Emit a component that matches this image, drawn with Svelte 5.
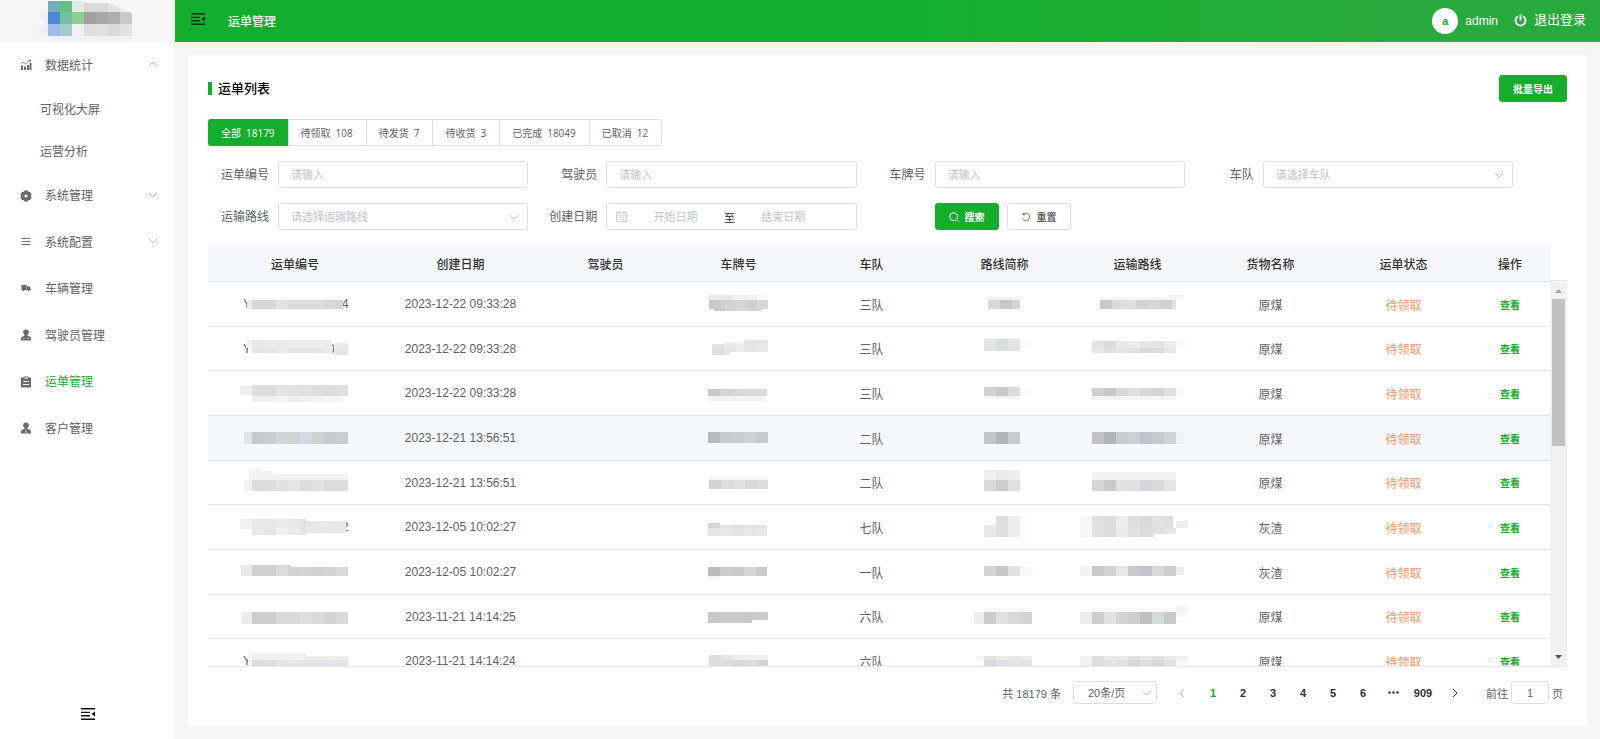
<script>
  const tabs = [
    { label: '全部', count: 18179 },
    { label: '待领取', count: 108 },
    { label: '待发货', count: 7 },
    { label: '待收货', count: 3 },
    { label: '已完成', count: 18049 },
    { label: '已取消', count: 12 },
  ];

  const menu = [
    { label: '数据统计', icon: 'chart', arrow: 'up', children: ['可视化大屏', '运营分析'] },
    { label: '系统管理', icon: 'gear', arrow: 'down' },
    { label: '系统配置', icon: 'operation', arrow: 'down' },
    { label: '车辆管理', icon: 'truck' },
    { label: '驾驶员管理', icon: 'driver' },
    { label: '运单管理', icon: 'order' },
    { label: '客户管理', icon: 'custom' },
  ];

  const columns = ['运单编号', '创建日期', '驾驶员', '车牌号', '车队', '路线简称', '运输路线', '货物名称', '运单状态', '操作'];

  // masked fields: bands of [x, y, width, height, shades], one shade per 12px block
  const rows = [
    {
      date: '2023-12-22 09:33:28', team: '三队', goods: '原煤',
      marks: [['Y', 8], ['4', 107]],
      no: [[13, 5, 94, 3, 'f8'], [12, 8, 5, 9, 'ed'], [17, 8, 91, 9, 'd6 d6 e2 dc dc dc d8 d2d6db']],
      plate: [[30, 3, 59, 5, 'ea ea f0 f4 f8'], [30, 8, 59, 9, 'c9 d3 d6 d0 d8'], [35, 17, 47, 2, 'c9 d3 d6 d0']],
      short: [[43, 5, 32, 3, 'f0'], [43, 8, 32, 9, 'd8 c8 d4']],
      route: [[22, 5, 76, 3, 'f4'], [90, 3, 16, 4, 'f4'], [22, 8, 76, 9, 'c9 dc dce0e0 d2 d6 d0 e3']],
    },
    {
      date: '2023-12-22 09:33:28', team: '三队', goods: '原煤',
      marks: [['Y', 8], ['0', 93]],
      no: [[11, 2, 6, 9, 'f2'], [17, 3, 80, 8, 'e8 ea ea ec ec ec ec'], [17, 11, 80, 5, 'e4 e6 ea e4 e4 e6 e8'], [99, 6, 14, 6, 'ea'], [99, 12, 14, 6, 'e4']],
      plate: [[45, 5, 20, 3, 'ee f2'], [33, 7, 33, 4, 'e2 e8 ee'], [33, 11, 33, 4, 'de e4 ec'], [33, 15, 18, 3, 'de e4'], [65, 3, 24, 12, 'e4 e6']],
      short: [[39, 2, 36, 12, 'e4 dadddd e4'], [75, 3, 12, 8, 'fb']],
      route: [[14, 4, 84, 7, 'e2 dc e8 ec e6 e4 ec'], [14, 11, 84, 5, 'e6 e0 e6 e2 d8 dc e8'], [98, 4, 10, 7, 'fa']],
    },
    {
      date: '2023-12-22 09:33:28', team: '三队', goods: '原煤',
      no: [[5, 5, 12, 9, 'ee'], [17, 4, 96, 11, 'dd dd e4 e2 e0 de dc dedfe2'], [17, 15, 90, 6, 'f0 f0 f4 ef f0 f1 f4 f2']],
      plate: [[29, 8, 59, 7, 'c8 d4 d8 da da'], [29, 15, 58, 5, 'f2']],
      short: [[39, 6, 36, 9, 'd1 c8 dc'], [39, 15, 36, 3, 'f3'], [75, 7, 12, 8, 'fb']],
      route: [[14, 7, 84, 8, 'd0 c7 da e0 d8 d4 e0'], [14, 15, 84, 4, 'f4'], [98, 7, 6, 8, 'fa']],
    },
    {
      date: '2023-12-21 13:56:51', team: '二队', goods: '原煤', hover: true,
      no: [[9, 6, 8, 12, 'dfe3e3'], [17, 6, 96, 12, 'c7c8ca c9cdcf d2d5d8 d0d2d3 d4d7dd cfd1d3 c9cacc c9ced1']],
      plate: [[29, 6, 60, 11, 'b7babd c8cacf cacbd0 d0d1d7 c6c9ce']],
      short: [[39, 6, 36, 12, 'c4c5c8 b2b5b9 c9cbcf']],
      route: [[14, 6, 84, 12, 'c2c2c5 b2b4b7 c8cbd0 cecfd1 bfc3cf c6c8cc d0d2d7'], [98, 6, 8, 12, 'eef0f3']],
    },
    {
      date: '2023-12-21 13:56:51', team: '二队', goods: '原煤',
      no: [[14, -2, 12, 5, 'f2'], [26, 0, 12, 3, 'f3'], [14, 3, 99, 6, 'f2'], [9, 9, 8, 11, 'f0'], [17, 9, 96, 11, 'dc dddde0 e2 e4 dd e2 dc dadee2']],
      plate: [[30, 6, 59, 3, 'f4'], [30, 9, 59, 9, 'd2 dd e0 d6d8dc dc']],
      short: [[39, -1, 36, 10, 'ef ea ee'], [39, 9, 36, 11, 'd9 cd dde1e5']],
      route: [[14, 1, 84, 8, 'f2'], [14, 9, 84, 11, 'd6 c9 e0e1e4 e0 d4d5da da e4']],
    },
    {
      date: '2023-12-05 10:02:27', team: '七队', goods: '灰渣',
      marks: [['2', 107]],
      no: [[5, 4, 12, 10, 'f0'], [17, 4, 54, 9, 'e6 e8 ea e6 e2'], [71, 6, 40, 12, 'e6 e8 e6 e6e8eb'], [17, 13, 54, 7, 'e8 e6 f2 ea e4']],
      plate: [[29, 8, 12, 5, 'd6'], [41, 10, 47, 4, 'e4 e0 e4 e2'], [29, 13, 59, 8, 'e4 e6 e3 e6 e8']],
      short: [[51, 1, 24, 21, 'dcdedf eeeeee'], [39, 10, 12, 12, 'e8'], [75, 1, 12, 21, 'fafcfe']],
      route: [[2, 1, 12, 21, 'f6'], [14, 1, 81, 12, 'e0 dc ee de da e2 e0'], [14, 13, 84, 6, 'e2 dc ea e2 dc e0 e4'], [14, 19, 62, 3, 'e2 dc ea e2 dc e0'], [98, 6, 12, 7, 'ebeff2']],
    },
    {
      date: '2023-12-05 10:02:27', team: '一队', goods: '灰渣',
      no: [[6, 5, 11, 11, 'ea'], [17, 5, 39, 11, 'd0 d0 dc d6'], [53, 7, 60, 9, 'd2 d4 d0 d3 d6dadd']],
      plate: [[29, 7, 59, 9, 'bc cccccf c9 d5 c9cad0'], [29, 16, 12, 4, 'f6']],
      short: [[39, 6, 36, 10, 'd4 c6 e2'], [75, 6, 12, 10, 'f5f9fd']],
      route: [[2, 6, 12, 10, 'f2'], [14, 6, 84, 10, 'c9 d2 e6 c8 c3c4c9 d8 cd'], [98, 7, 8, 8, 'ebeff2']],
    },
    {
      date: '2023-11-21 14:14:25', team: '六队', goods: '原煤',
      no: [[7, 7, 10, 12, 'eaeceb'], [17, 7, 96, 12, 'cfcecd cfcecd da da dddee0 dadadc d3d4d6 da']],
      plate: [[29, 7, 60, 8, 'c8 ca ca c8 cc'], [29, 15, 44, 3, 'c8 ca ca c8']],
      short: [[39, 3, 48, 4, 'f8'], [29, 7, 10, 12, 'ee'], [39, 7, 48, 12, 'cacbcd e0 d6d7d6 d3d4d6']],
      route: [[14, 3, 84, 4, 'f8'], [2, 7, 12, 12, 'ec'], [14, 7, 84, 12, 'cbcdce e2 d4 cd bf d5dade c9'], [98, 1, 12, 6, 'f4'], [98, 7, 10, 6, 'f5f9fd']],
    },
    {
      date: '2023-11-21 14:14:24', team: '六队', goods: '原煤',
      marks: [['Y', 8]],
      no: [[13, 4, 4, 14, 'f6'], [17, 4, 54, 7, 'f0'], [71, 7, 42, 4, 'ee'], [17, 11, 96, 8, 'dd df e4 e6 e4 e2e4e6 e4e5e8 e4']],
      plate: [[30, 6, 59, 5, 'dd e6 ee f0 f0'], [30, 11, 59, 9, 'dd dd d8 dc d4']],
      short: [[31, 7, 8, 4, 'f4'], [39, 7, 48, 4, 'e2 ec e8 ec'], [39, 11, 48, 8, 'd9dadc dfe0e3 e6 e4']],
      route: [[2, 7, 108, 4, 'f2 de ea e8 e2 e6 e2 e8 ee'], [2, 11, 108, 8, 'f2 dcdddf e4 e0 d8 de d8 e2 f5f9fd']],
    },
  ];

  const logo = [
    ['#74aebd', '#63bf86', '#deeedd', '#dadada', '#dadada', '#e4e4e4', '#f0f0f0'],
    ['#4d88d6', '#74c19d', '#8dce95', '#a0a0a0', '#a8a8a8', '#aeaeae', '#c8c8c8'],
    ['#a1b9ed', '#a3cbcb', '#f0f0f0', '#dedede', '#e0e0e0', '#dadada', '#e2e2e2'],
  ];

  const pages = [1, 2, 3, 4, 5, 6];

  let activeTab = $state(0);
  let activeMenu = $state('运单管理');
  let page = $state(1);

  function blocks([x, y, w, h, shades]) {
    const list = shades.split(' ');
    if (list.length === 1) return [{ x, y, w, h, fill: color(list[0]) }];
    return list
      .map((c, i) => ({ x: x + i * 12, y, w: Math.min(12, w - i * 12), h, fill: color(c) }))
      .filter((b) => b.w > 0);
  }

  function color(c) {
    return '#' + (c.length === 2 ? c.repeat(3) : c);
  }
</script>

{#snippet mask(bands, marks = [])}
  <svg class="mask" width="120" height="24" viewBox="0 0 120 24" shape-rendering="crispEdges">
    {#each marks as [ch, x]}
      <text {x} y="16">{ch}</text>
    {/each}
    {#each bands.flatMap(blocks) as b}
      <rect x={b.x} y={b.y} width={b.w} height={b.h} fill={b.fill} />
    {/each}
  </svg>
{/snippet}

{#snippet chevron(dir)}
  <svg class="chevron" width="10" height="10" viewBox="0 0 10 10" fill="none" stroke="currentColor">
    {#if dir === 'up'}
      <path d="M1 7l4-4 4 4" />
    {:else if dir === 'left'}
      <path d="M7 1L3 5l4 4" />
    {:else if dir === 'right'}
      <path d="M3 1l4 4-4 4" />
    {:else}
      <path d="M1 3l4 4 4-4" />
    {/if}
  </svg>
{/snippet}

{#snippet fold()}
  <svg width="14" height="12" viewBox="0 0 14 12" fill="currentColor">
    <path d="M0 0h14v1.6H0zM0 3.7h9v1.4H0zM0 7h9v1.4H0zM0 10.6h14V12H0zM14 3.6v5L10.4 6z" />
  </svg>
{/snippet}

<div class="layout">
  <aside class="sidebar">
    <div class="logo">
      <svg width="96" height="42" viewBox="0 0 96 42" shape-rendering="crispEdges">
        <path d="M0 12h10v24H2l-2-4 6-10zM10 36h84v3l-8 2H14z" fill="#f0f1f6" />
        <clipPath id="logo-shape"><path d="M10 1h36v2h24l12 4 8 3 4 4v22H10z" /></clipPath>
        <g clip-path="url(#logo-shape)">
          {#each logo as line, r}
            {#each line as fill, c}
              <rect x={10 + c * 12} y={r * 12} width="12" height="12" {fill} />
            {/each}
          {/each}
        </g>
      </svg>
    </div>

    <nav>
      <ul class="menu">
        {#each menu as item}
          <li>
            <a
              href="#menu"
              class="item"
              class:active={item.label === activeMenu}
              onclick={() => (activeMenu = item.label)}
            >
              <svg class="menu-icon" width="12" height="12" viewBox="0 0 12 12" fill="currentColor">
                {#if item.icon === 'chart'}
                  <path d="M1 6.500h2V11H1zM4 7.500h2V11H4zM7 6h2v5H7zM9.500 4h2v7h-2z" />
                  <path d="M1 4.500l2-1.500L5.500 5 10 1.200M8.600 1H10.600V3" fill="none" stroke="currentColor" stroke-width=".8" />
                {:else if item.icon === 'gear'}
                  <path fill-rule="evenodd" d="M4.200.5h3.600l.4 1.600 1.700-.3L11.700 4.500 10.600 6l1.100 1.500-1.800 2.700-1.700-.3-.4 1.600H4.200l-.4-1.600-1.700.3L.3 7.500 1.400 6 .3 4.500l1.800-2.700 1.700.3zM6 4.400a1.600 1.600 0 100 3.200 1.600 1.600 0 000-3.200z" />
                {:else if item.icon === 'operation'}
                  <path d="M1.500 2.500h9M1.500 5.500h9M1.500 8.500h9M4 1.600v1.800M8 4.600v1.800M5 7.600v1.800" fill="none" stroke="currentColor" stroke-width=".9" />
                {:else if item.icon === 'truck'}
                  <path d="M1.500 2h5.200v5H1.500zM7 3.300h2.200l1.500 1.800V7H7z" />
                  <circle cx="3.500" cy="7.300" r="1" /><circle cx="8.700" cy="7.300" r="1" />
                {:else if item.icon === 'order'}
                  <path fill-rule="evenodd" d="M1 1.500h2.800V.5h4.400v1H11v10H1zM3 5v1h6V5zM3 8v1h6V8zM4.500 1.500v1.200h3V1.500z" />
                {:else}
                  <circle cx="6" cy="3.300" r="2.800" />
                  <path d="M4.500 5h3v2l3 .8.800 3.700H.7l.8-3.700 3-.8z" />
                  {#if item.icon === 'custom'}
                    <path d="M6 7.500l.7 3H5.300z" fill="#fff" />
                  {:else}
                    <path d="M3 9.500h1.500M7.500 9.500H9" stroke="#fff" stroke-width=".6" />
                  {/if}
                {/if}
              </svg>
              <span>{item.label}</span>
              {#if item.arrow}{@render chevron(item.arrow)}{/if}
            </a>
            {#if item.children}
              <ul>
                {#each item.children as child}
                  <li><a class="sub" href="#menu">{child}</a></li>
                {/each}
              </ul>
            {/if}
          </li>
        {/each}
      </ul>
    </nav>

    <button class="fold-bottom" aria-label="收起菜单">{@render fold()}</button>
  </aside>

  <div class="main">
    <header class="topbar">
      <button class="fold-top" aria-label="折叠">{@render fold()}</button>
      <span class="crumb">运单管理</span>
      <span class="avatar">a</span>
      <span class="user">admin</span>
      <button class="logout">
        <svg width="13" height="13" viewBox="0 0 13 13" fill="none" stroke="currentColor" stroke-width="1.8">
          <path d="M4 2.200a5 5 0 105 0M6.500.5v6" />
        </svg>
        退出登录
      </button>
    </header>

    <main class="card">
      <div class="card-head">
        <h1>运单列表</h1>
        <button class="btn primary">批量导出</button>
      </div>

      <div class="tabs">
        {#each tabs as tab, i}
          <button class="tab" class:active={i === activeTab} onclick={() => (activeTab = i)}>
            <span>{tab.label}</span>
            <span>{tab.count}</span>
          </button>
        {/each}
      </div>

      <form class="filters" onsubmit={(e) => e.preventDefault()}>
        <div class="field">
          <label for="no">运单编号</label>
          <input id="no" class="control" type="text" placeholder="请输入" />
        </div>
        <div class="field">
          <label for="driver">驾驶员</label>
          <input id="driver" class="control" type="text" placeholder="请输入" />
        </div>
        <div class="field">
          <label for="plate">车牌号</label>
          <input id="plate" class="control" type="text" placeholder="请输入" />
        </div>
        <div class="field">
          <label for="team">车队</label>
          <div class="select">
            <select id="team" class="control"><option>请选择车队</option></select>
            {@render chevron('down')}
          </div>
        </div>
        <div class="field">
          <label for="route">运输路线</label>
          <div class="select">
            <select id="route" class="control"><option>请选择运输路线</option></select>
            {@render chevron('down')}
          </div>
        </div>
        <div class="field">
          <label for="start">创建日期</label>
          <div class="control range">
            <svg width="11" height="11" viewBox="0 0 11 11" fill="none" stroke="currentColor">
              <path d="M.5 1.500h10v9H.5zM.5 4h10M3 0v2.500M8 0v2.500M2.500 6.200h6M2.500 8.200h6" stroke-width=".8" />
            </svg>
            <input id="start" type="text" placeholder="开始日期" />
            <span>至</span>
            <input type="text" placeholder="结束日期" aria-label="结束日期" />
          </div>
        </div>
        <div class="field actions">
          <button class="btn primary" type="submit">
            <svg width="10" height="10" viewBox="0 0 10 10" fill="none" stroke="currentColor">
              <circle cx="4.700" cy="4.700" r="4" /><path d="M7.500 7.500L9.500 9.500" />
            </svg>
            搜索
          </button>
          <button class="btn" type="reset">
            <svg width="10" height="10" viewBox="0 0 10 10" fill="none" stroke="currentColor" stroke-width=".9">
              <path d="M2.200 2.200a3.800 3.800 0 11-.8 4.300M2 .8v2h2" />
            </svg>
            重置
          </button>
        </div>
      </form>

      <div class="table-wrap">
        <div class="viewport">
          <table>
            <colgroup>
              <col class="col-no" />
              <col class="col-date" />
              <col span="7" />
              <col class="col-action" />
            </colgroup>
            <thead>
              <tr>
                {#each columns as column}
                  <th>{column}</th>
                {/each}
              </tr>
            </thead>
            <tbody>
              {#each rows as row}
                <tr class:hover={row.hover}>
                  <td>{@render mask(row.no, row.marks)}</td>
                  <td>{row.date}</td>
                  <td></td>
                  <td>{@render mask(row.plate)}</td>
                  <td>{row.team}</td>
                  <td>{@render mask(row.short)}</td>
                  <td>{@render mask(row.route)}</td>
                  <td>{row.goods}</td>
                  <td class="status">待领取</td>
                  <td><button class="view">查看</button></td>
                </tr>
              {/each}
            </tbody>
          </table>
        </div>
        <div class="scroll">
          <div class="scroll-head"></div>
          <div class="scroll-track">
            <svg width="17" height="17" viewBox="0 0 17 17" fill="#a3a3a3"><path d="M5 11h7L8.500 7z" /></svg>
            <div class="thumb"></div>
            <svg width="17" height="17" viewBox="0 0 17 17" fill="#505050"><path d="M5 6h7l-3.500 4z" /></svg>
          </div>
        </div>
      </div>

      <div class="pagination">
        <span class="total">共 18179 条</span>
        <div class="select size">
          <select class="control" aria-label="每页条数"><option>20条/页</option></select>
          {@render chevron('down')}
        </div>
        <button class="pager prev" aria-label="上一页" disabled>{@render chevron('left')}</button>
        {#each pages as n}
          <button class="pager" class:active={n === page} onclick={() => (page = n)}>{n}</button>
        {/each}
        <button class="pager" aria-label="向后翻页">
          <svg width="11" height="3" viewBox="0 0 11 3" fill="currentColor">
            <circle cx="1.500" cy="1.500" r="1.200" /><circle cx="5.500" cy="1.500" r="1.200" /><circle cx="9.500" cy="1.500" r="1.200" />
          </svg>
        </button>
        <button class="pager" onclick={() => (page = 909)}>909</button>
        <button class="pager next" aria-label="下一页">{@render chevron('right')}</button>
        <label class="jump">前往 <input class="control" type="text" value="1" /> 页</label>
      </div>
    </main>
  </div>
</div>

<style>
  :global(body) {
    margin: 0;
    background: #f5f5f5;
  }

  .layout {
    display: flex;
    height: 100vh;
    font-family: 'Liberation Sans', 'Noto Sans CJK SC', sans-serif;
    font-size: 12px;
    color: #606266;
  }

  .layout :global(*) {
    box-sizing: border-box;
  }

  button,
  input,
  select {
    font-family: inherit;
    margin: 0;
  }

  button {
    border: none;
    background: none;
    padding: 0;
    cursor: pointer;
    color: inherit;
  }

  svg {
    display: block;
    flex-shrink: 0;
  }

  /* sidebar */
  .sidebar {
    width: 175px;
    flex-shrink: 0;
    display: flex;
    flex-direction: column;
    background: #fff;
  }

  .logo {
    height: 42px;
    padding-left: 38px;
    background: #f5f5f5;
  }

  nav {
    flex: 1;
  }

  ul {
    list-style: none;
    margin: 0;
    padding: 0;
  }

  .item {
    display: flex;
    align-items: center;
    height: 46px;
    padding: 0 20px;
    gap: 13px;
    color: #606266;
    text-decoration: none;
  }

  .menu > li:nth-child(even) .item {
    height: 47px;
  }

  .item span {
    flex: 1;
    padding-bottom: 2px;
  }

  .item.active span {
    color: #13ae2b;
  }

  .menu-icon {
    color: #6b6b6b;
  }

  .chevron {
    color: #b4b8bf;
  }

  .item .chevron {
    margin: 0 -3px 2px 0;
  }

  .sub {
    display: flex;
    align-items: center;
    height: 42px;
    padding: 0 0 2px 40px;
    color: #606266;
    text-decoration: none;
  }

  .fold-bottom {
    align-self: center;
    margin-bottom: 19px;
    color: #111;
  }

  /* top bar */
  .main {
    flex: 1;
    min-width: 0;
    display: flex;
    flex-direction: column;
  }

  .topbar {
    display: flex;
    align-items: center;
    height: 42px;
    flex-shrink: 0;
    padding: 0 14px 0 16px;
    background: linear-gradient(90deg, #13ae2b 50%, #27ab3c 85%);
    color: #fff;
  }

  .fold-top {
    color: #06300c;
    padding-bottom: 4px;
  }

  .crumb {
    flex: 1;
    margin-left: 23px;
    padding-bottom: 2px;
    font-weight: 500;
  }

  .avatar {
    display: flex;
    align-items: center;
    justify-content: center;
    width: 26px;
    height: 26px;
    border-radius: 50%;
    background: #fff;
    color: #13ae2b;
    font-size: 11px;
    font-weight: 700;
  }

  .user {
    margin: 0 16px 0 7px;
  }

  .logout {
    display: flex;
    align-items: center;
    gap: 7px;
    padding-bottom: 2px;
    font-size: 13px;
    line-height: 20px;
  }

  /* card */
  .card {
    flex: 1;
    min-height: 0;
    display: flex;
    flex-direction: column;
    margin: 13px;
    padding: 20px 20px 22px;
    background: #fff;
  }

  .card-head {
    display: flex;
    align-items: center;
    justify-content: space-between;
    margin-bottom: 17px;
  }

  h1 {
    margin: 0;
    padding-left: 6px;
    border-left: 4px solid #13ae2b;
    font-size: 13px;
    font-weight: 500;
    line-height: 13px;
    color: #000;
  }

  .btn {
    display: flex;
    align-items: center;
    gap: 6px;
    height: 27px;
    padding: 0 13px;
    border: 1px solid #dcdfe6;
    border-radius: 3px;
    font-size: 10px;
    font-weight: 700;
    color: #606266;
    background: #fff;
  }

  .btn.primary {
    border-color: #13ae2b;
    background: #13ae2b;
    color: #fff;
  }

  .tabs {
    display: flex;
    align-self: flex-start;
    height: 27px;
    margin-bottom: 15px;
    border: 1px solid #dcdfe6;
    border-radius: 3px;
  }

  .tab {
    display: flex;
    align-items: center;
    gap: 5px;
    padding: 0 12px;
    border-left: 1px solid #dcdfe6;
    font-family: 'Open Sans', 'Noto Sans CJK SC', sans-serif;
    font-size: 10px;
  }

  .tab + .tab {
    padding-right: 13px;
  }

  .tab:first-child {
    border-left: none;
  }

  .tab.active {
    margin: -1px 0 -1px -1px;
    padding: 0 13px;
    border-radius: 3px 0 0 3px;
    background: #13ae2b;
    color: #fff;
  }

  .filters {
    display: grid;
    grid-template-columns: repeat(4, minmax(0, 1fr));
    gap: 15px 8px;
    margin: 0 54px 15px 0;
  }

  .field {
    display: flex;
    align-items: center;
  }

  .field label {
    width: 70px;
    flex-shrink: 0;
    padding: 0 9px 2px 0;
    text-align: right;
  }

  .control {
    width: 100%;
    height: 27px;
    padding: 0 12px;
    border: 1px solid #dcdfe6;
    border-radius: 3px;
    background: #fff;
    color: #606266;
    font-size: 11px;
    outline: none;
  }

  .field select {
    color: #c0c4cc;
  }

  input::placeholder {
    color: #c0c4cc;
  }

  .field .control {
    flex: 1;
    min-width: 0;
  }

  .select {
    flex: 1;
    display: grid;
    align-items: center;
  }

  .select select,
  .select :global(.chevron) {
    grid-area: 1 / 1;
  }

  .select :global(.chevron) {
    justify-self: end;
    margin-right: 9px;
    pointer-events: none;
    color: #c0c4cc;
  }

  select {
    appearance: none;
  }

  .field .range {
    display: flex;
    align-items: center;
    padding: 0 24px 0 9px;
    color: #c0c4cc;
  }

  .range input {
    flex: 1;
    min-width: 0;
    padding: 0;
    border: none;
    outline: none;
    text-align: center;
    font-size: 11px;
  }

  .range span {
    color: #303133;
  }

  .actions {
    padding-left: 70px;
    gap: 8px;
  }

  /* table */
  .table-wrap {
    flex: 1;
    min-height: 0;
    display: flex;
    border-bottom: 1px solid #e6e9f5;
  }

  .viewport {
    flex: 1;
    overflow: hidden;
  }

  table {
    width: 100%;
    table-layout: fixed;
    border-collapse: separate;
    border-spacing: 0;
    text-align: center;
  }

  .col-no {
    width: 174px;
  }

  .col-date {
    width: 157px;
  }

  .col-action {
    width: 80px;
  }

  th,
  td {
    padding: 0;
    border-bottom: 1px solid #dfe6ec;
  }

  th {
    position: sticky;
    top: 0;
    height: 37px;
    background: #f5f7fb;
    color: #303133;
    font-weight: 500;
  }

  td {
    height: 45px;
  }

  tbody tr:nth-child(3n + 2) td {
    height: 44px;
  }

  tr.hover td {
    background: #f5f7fb;
  }

  .mask {
    margin: 0 auto;
    overflow: visible;
  }

  .mask text {
    fill: #606266;
  }

  .status {
    color: #f49466;
  }

  .view {
    color: #13ae2b;
    font-size: 10px;
    font-weight: 700;
  }

  .scroll {
    width: 17px;
    display: flex;
    flex-direction: column;
  }

  .scroll-head {
    height: 36px;
    margin-bottom: 1px;
    border-bottom: 1px solid #dfe6ec;
  }

  .scroll-track {
    flex: 1;
    display: flex;
    flex-direction: column;
    background: #f1f1f1;
  }

  .thumb {
    height: 147px;
    margin: 0 2px auto;
    background: #c1c1c1;
  }

  /* pagination */
  .pagination {
    display: flex;
    align-items: center;
    justify-content: flex-end;
    margin-top: 14px;
    font-size: 11px;
  }

  .pagination .control {
    height: 23px;
  }

  .size {
    flex: none;
    width: 84px;
    margin: 0 8px 0 12px;
  }

  .size select {
    padding: 0 14px;
  }

  .size :global(.chevron) {
    margin-right: 5px;
  }

  .pager {
    display: flex;
    align-items: center;
    justify-content: center;
    width: 30px;
    height: 23px;
    font-size: 11px;
    font-weight: 700;
    color: #303133;
  }

  .pager.active {
    color: #13ae2b;
  }

  .prev,
  .next {
    width: 33px;
  }

  .next :global(.chevron) {
    color: #303133;
  }

  .jump {
    display: flex;
    align-items: center;
    gap: 3px;
    margin-left: 15px;
    padding-right: 4px;
  }

  .jump input {
    width: 38px;
    padding: 0;
    text-align: center;
  }
</style>
